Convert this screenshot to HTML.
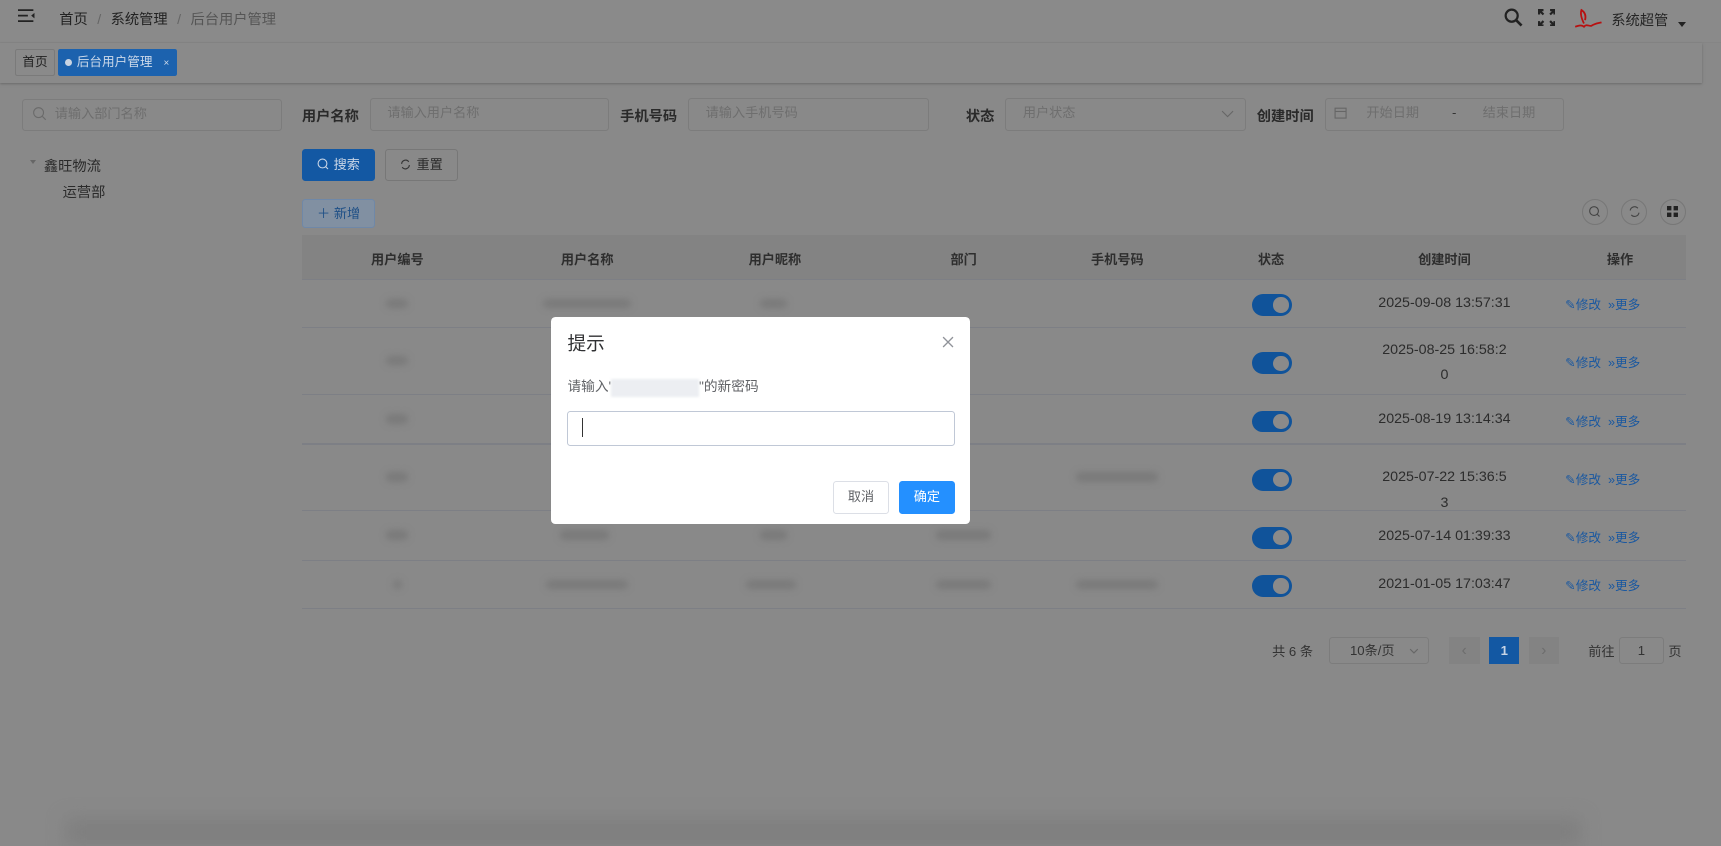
<!DOCTYPE html>
<html><head><meta charset="utf-8">
<style>
html{zoom:1.0976}
body{margin:0;width:1568px;height:771px;overflow:hidden;background:#898989;font-family:"Liberation Sans","Noto Sans CJK SC",sans-serif;color:#2b2b2b;position:relative}
.a{position:absolute}
.inp{position:absolute;border:1px solid #7c7c7c;border-radius:3px;box-sizing:border-box;color:#6e6e6e;font-size:12px;line-height:26px}
.lbl{position:absolute;font-size:13px;font-weight:bold;color:#2a2a2a}
.th{position:absolute;top:227px;font-size:12px;font-weight:bold;color:#2e2e2e;transform:translateX(-50%)}
.hl{position:absolute;left:275px;width:1261px;height:1px;background:#7d7f85}
.tg{position:absolute;left:1141px;width:36px;height:20px;border-radius:10px;background:#10539a}
.tg:after{content:"";position:absolute;right:3px;top:3px;width:14px;height:14px;border-radius:50%;background:#8a8a8a}
.tm{position:absolute;left:1236px;width:160px;text-align:center;font-size:13px;color:#2c2c2c;line-height:23px}
.op{position:absolute;left:1426px;font-size:11.5px;color:#1a58a0}
.bl{position:absolute;height:9px;background:#7a7a7a;filter:blur(3px);border-radius:4px}
.cb{position:absolute;top:181px;width:24px;height:24px;border:1px solid #777;border-radius:50%;box-sizing:border-box}
</style></head><body>
<div class="a" style="left:0;top:0;width:1568px;height:38px;background:#8a8a8a;border-bottom:1px solid #858585"></div>
<svg class="a" style="left:16px;top:8px" width="16" height="13"><path d="M0 1h14M0 6h9M0 11h14" stroke="#222" stroke-width="1.6"/><path d="M15 3.5l-3 2.5 3 2.5z" fill="#222"/></svg>
<div class="a" style="left:54px;top:7px;font-size:13px;color:#222">首页 <span style="color:#666;margin:0 5px">/</span> 系统管理 <span style="color:#666;margin:0 5px">/</span> <span style="color:#555">后台用户管理</span></div>
<svg class="a" style="left:1370px;top:7px" width="18" height="18"><circle cx="7" cy="7" r="5.5" fill="none" stroke="#222" stroke-width="2"/><path d="M11 11l5 5" stroke="#222" stroke-width="2.4"/></svg>
<svg class="a" style="left:1401px;top:8px" width="16" height="16" fill="none" stroke="#222" stroke-width="2"><path d="M1 5V1h4M1 1l4 4M11 1h4v4M15 1l-4 4M1 11v4h4M1 15l4-4M15 11v4h-4M15 15l-4-4"/></svg>
<svg class="a" style="left:1433px;top:6px" width="30" height="20"><path d="M2 18c3-1 6-2 8 0 2-3 5 0 7-1 3-2 5-2 9-3M8 2c-2 4 0 9 2 13M8 3c3 2 4 5 3 9" stroke="#b81010" stroke-width="1.6" fill="none"/></svg>
<div class="a" style="left:1468px;top:8px;font-size:13px;color:#252525">系统超管</div>
<div class="a" style="left:1529px;top:20px;border:4px solid transparent;border-top:5px solid #222"></div>
<div class="a" style="left:0;top:39px;width:1551px;height:37px;background:#8a8a8a;box-shadow:0 1px 2px #6a6a6a"></div>
<div class="a" style="left:14px;top:45px;width:34px;height:22px;border:1px solid #7a7a7a;border-radius:2px;font-size:11.5px;line-height:22px;text-align:center;color:#222">首页</div>
<div class="a" style="left:53px;top:45px;width:108px;height:24px;background:#1c62ae;border-radius:2px;font-size:11.5px;line-height:24px;color:#ccd9ea"><span style="display:inline-block;width:7px;height:7px;border-radius:50%;background:#c9d4e2;margin:0 4px 0 6px"></span>后台用户管理<span style="font-size:9px;margin-left:10px">×</span></div>
<div class="inp" style="left:20px;top:90px;width:237px;height:29px;padding-left:29px">请输入部门名称</div>
<svg class="a" style="left:29px;top:97px" width="14" height="14" fill="none" stroke="#6a6a6a"><circle cx="6" cy="6" r="4.5"/><path d="M9.5 9.5l3 3"/></svg>
<div class="a" style="left:27px;top:146px;border:3.5px solid transparent;border-top:4px solid #666"></div>
<div class="a" style="left:40px;top:141px;font-size:13px;color:#2a2a2a">鑫旺物流</div>
<div class="a" style="left:57px;top:165px;font-size:13px;color:#2a2a2a">运营部</div>
<div class="lbl" style="left:275px;top:96px">用户名称</div>
<div class="inp" style="left:337px;top:89px;width:218px;height:30px;padding-left:15px">请输入用户名称</div>
<div class="lbl" style="left:565px;top:96px">手机号码</div>
<div class="inp" style="left:627px;top:89px;width:219px;height:30px;padding-left:15px">请输入手机号码</div>
<div class="lbl" style="left:880px;top:96px">状态</div>
<div class="inp" style="left:916px;top:89px;width:219px;height:30px;padding-left:15px">用户状态</div>
<svg class="a" style="left:1112px;top:100px" width="12" height="8" fill="none" stroke="#666"><path d="M1 1l5 5 5-5"/></svg>
<div class="lbl" style="left:1145px;top:96px">创建时间</div>
<div class="inp" style="left:1207px;top:89px;width:218px;height:30px;padding-left:37px">开始日期<span style="margin:0 24px 0 30px;color:#333">-</span>结束日期</div>
<svg class="a" style="left:1215px;top:97px" width="12" height="12" fill="none" stroke="#666"><rect x="1" y="2" width="10" height="9"/><path d="M1 5h10"/></svg>
<div class="a" style="left:275px;top:136px;width:67px;height:29px;background:#1358a3;border-radius:3px;color:#c8d5e6;font-size:12px;line-height:29px;text-align:center"><svg width="11" height="11" fill="none" stroke="#c8d5e6" style="vertical-align:-1px;margin-right:4px"><circle cx="5" cy="5" r="4"/><path d="M8 8l2 2"/></svg>搜索</div>
<div class="a" style="left:351px;top:136px;width:66px;height:29px;border:1px solid #777;box-sizing:border-box;border-radius:3px;font-size:12px;line-height:27px;text-align:center;color:#2a2a2a"><svg width="10" height="10" fill="none" stroke="#333" style="vertical-align:-1px;margin-right:5px"><path d="M1.5 4.5a3.6 3.6 0 0 1 6.5-2M8.5 5.5a3.6 3.6 0 0 1-6.5 2"/></svg>重置</div>
<div class="a" style="left:275px;top:181px;width:67px;height:27px;border:1px solid #6f88a8;background:#8190a2;box-sizing:border-box;border-radius:3px;color:#1e4f86;font-size:12px;line-height:25px;text-align:center">＋ 新增</div>
<div class="cb" style="left:1441px"></div><div class="cb" style="left:1477px"></div><div class="cb" style="left:1512px"></div>
<svg class="a" style="left:1447px;top:187px" width="12" height="12" fill="none" stroke="#444"><circle cx="5.5" cy="5.5" r="4"/><path d="M8.5 8.5l2 2"/></svg>
<svg class="a" style="left:1483px;top:187px" width="12" height="12" fill="none" stroke="#444"><path d="M2 5a4 4 0 0 1 7-2M10 7a4 4 0 0 1-7 2"/></svg>
<svg class="a" style="left:1519px;top:188px" width="10" height="10" fill="#222"><rect width="4" height="4"/><rect x="6" width="4" height="4"/><rect y="6" width="4" height="4"/><rect x="6" y="6" width="4" height="4"/></svg>
<div class="a" style="left:275px;top:214px;width:1261px;height:40px;background:#838383"></div>
<div class="hl" style="top:254px"></div>
<div class="th" style="left:362px">用户编号</div><div class="th" style="left:535px">用户名称</div><div class="th" style="left:706px">用户昵称</div><div class="th" style="left:878px">部门</div><div class="th" style="left:1018px">手机号码</div><div class="th" style="left:1158px">状态</div><div class="th" style="left:1316px">创建时间</div><div class="th" style="left:1476px">操作</div>
<div class="hl" style="top:298px"></div><div class="hl" style="top:359px"></div><div class="hl" style="top:404px"></div><div class="hl" style="top:465px"></div><div class="hl" style="top:510px"></div><div class="hl" style="top:554px"></div>
<div class="bl" style="left:352px;top:272px;width:20px"></div><div class="bl" style="left:495px;top:272px;width:80px"></div><div class="bl" style="left:692px;top:272px;width:25px"></div>
<div class="bl" style="left:352px;top:324px;width:20px"></div><div class="bl" style="left:352px;top:377px;width:20px"></div><div class="bl" style="left:352px;top:430px;width:20px"></div>
<div class="bl" style="left:980px;top:430px;width:75px"></div>
<div class="bl" style="left:352px;top:483px;width:20px"></div><div class="bl" style="left:510px;top:483px;width:45px"></div><div class="bl" style="left:692px;top:483px;width:25px"></div><div class="bl" style="left:853px;top:483px;width:50px"></div>
<div class="bl" style="left:358px;top:528px;width:8px"></div><div class="bl" style="left:497px;top:528px;width:75px"></div><div class="bl" style="left:680px;top:528px;width:45px"></div><div class="bl" style="left:853px;top:528px;width:50px"></div><div class="bl" style="left:980px;top:528px;width:75px"></div>
<div class="tg" style="top:268px"></div><div class="tg" style="top:321px"></div><div class="tg" style="top:374px"></div><div class="tg" style="top:427px"></div><div class="tg" style="top:480px"></div><div class="tg" style="top:524px"></div>
<div class="tm" style="top:265px">2025-09-08 13:57:31</div>
<div class="tm" style="top:308px">2025-08-25 16:58:2<br>0</div>
<div class="tm" style="top:371px">2025-08-19 13:14:34</div>
<div class="tm" style="top:424px">2025-07-22 15:36:5<br>3</div>
<div class="tm" style="top:477px">2025-07-14 01:39:33</div>
<div class="tm" style="top:521px">2021-01-05 17:03:47</div>
<div class="op" style="top:268px">✎修改 &nbsp;»更多</div><div class="op" style="top:321px">✎修改 &nbsp;»更多</div><div class="op" style="top:374px">✎修改 &nbsp;»更多</div><div class="op" style="top:427px">✎修改 &nbsp;»更多</div><div class="op" style="top:480px">✎修改 &nbsp;»更多</div><div class="op" style="top:524px">✎修改 &nbsp;»更多</div>
<div class="a" style="left:1159px;top:584px;font-size:12px;color:#333">共 6 条</div>
<div class="inp" style="left:1211px;top:580px;width:91px;height:25px;padding-left:18px;line-height:23px;color:#333">10条/页</div>
<svg class="a" style="left:1284px;top:590px" width="9" height="6" fill="none" stroke="#666"><path d="M1 1l3.5 3.5L8 1"/></svg>
<div class="a" style="left:1320px;top:580px;width:28px;height:25px;background:#838383;color:#6d6d6d;text-align:center;line-height:25px;font-size:14px">‹</div>
<div class="a" style="left:1357px;top:580px;width:27px;height:25px;background:#1358a3;color:#c8d5e6;text-align:center;line-height:25px;font-size:12px;font-weight:bold">1</div>
<div class="a" style="left:1393px;top:580px;width:27px;height:25px;background:#838383;color:#6d6d6d;text-align:center;line-height:25px;font-size:14px">›</div>
<div class="a" style="left:1447px;top:584px;font-size:12px;color:#333">前往</div>
<div class="inp" style="left:1475px;top:580px;width:41px;height:25px;text-align:center;line-height:23px;color:#333">1</div>
<div class="a" style="left:1520px;top:584px;font-size:12px;color:#333">页</div>
<div class="a" style="left:60px;top:745px;width:1380px;height:26px;background:#7f7f7f;filter:blur(8px)"></div>
<div class="a" style="left:502px;top:289px;width:382px;height:188px;background:#fff;border-radius:4px"></div>
<div class="a" style="left:517px;top:300px;font-size:17px;color:#303133">提示</div>
<svg class="a" style="left:858px;top:306px" width="11" height="11" stroke="#909399" stroke-width="1.2"><path d="M1 1l9 9M10 1l-9 9"/></svg>
<div class="a" style="left:517px;top:342px;font-size:12.5px;color:#606266">请输入'<span style="display:inline-block;width:80px;height:16px;background:#eceef2;vertical-align:middle;filter:blur(1px)"></span>"的新密码</div>
<div class="a" style="left:517px;top:374px;width:353px;height:32px;border:1px solid #c0c8d6;border-radius:3px;box-sizing:border-box"></div>
<div class="a" style="left:530px;top:381px;width:1px;height:17px;background:#333"></div>
<div class="a" style="left:759px;top:438px;width:51px;height:30px;border:1px solid #dcdfe6;box-sizing:border-box;border-radius:3px;font-size:12px;line-height:28px;text-align:center;color:#606266">取消</div>
<div class="a" style="left:819px;top:438px;width:51px;height:30px;background:#2490ff;border-radius:3px;font-size:12px;line-height:30px;text-align:center;color:#fff">确定</div>
</body></html>
